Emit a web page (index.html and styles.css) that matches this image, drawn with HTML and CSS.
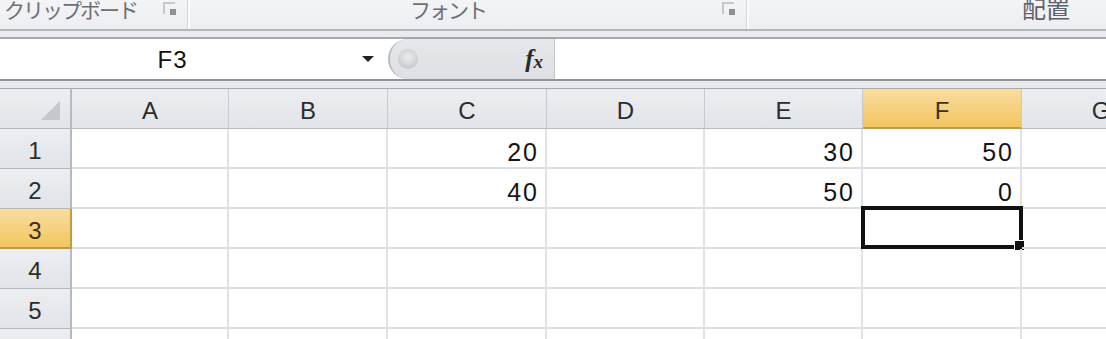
FILE: index.html
```html
<!DOCTYPE html>
<html>
<head>
  <title>Book1 - Excel</title>
  <link rel="stylesheet" href="styles.css">
</head>
<body>

<div class="ribbon">
  <div class="group group-clip">
    <span class="group-label">クリップボード</span>
    <span class="launcher"></span>
  </div>
  <div class="group group-font">
    <span class="group-label">フォント</span>
    <span class="launcher"></span>
  </div>
  <div class="group group-align">
    <span class="group-label">配置</span>
  </div>
</div>

<div class="formula-wrap">
  <div class="formula-bar">
    <div class="name-box">
      <span class="name-text">F3</span>
      <span class="name-arrow"></span>
    </div>
    <div class="fx-area">
      <span class="fx-knob"></span>
      <span class="fx">f<sub>x</sub></span>
    </div>
    <div class="formula-input"></div>
  </div>
</div>

<div class="sheet" id="sheet">
  <div class="corner"><span class="corner-tri"></span></div>
  <div class="col-head">A</div>
  <div class="col-head">B</div>
  <div class="col-head">C</div>
  <div class="col-head">D</div>
  <div class="col-head">E</div>
  <div class="col-head active">F</div>
  <div class="col-head">G</div>
</div>

<script>
  // cell values by row, columns A..G
  const data = [
    ["", "", "20", "", "30", "50", ""],
    ["", "", "40", "", "50", "0", ""],
    ["", "", "", "", "", "", ""],
    ["", "", "", "", "", "", ""],
    ["", "", "", "", "", "", ""],
    ["", "", "", "", "", "", ""]
  ];

  const sheet = document.getElementById("sheet");

  data.forEach((row, r) => {
    const head = document.createElement("div");
    head.className = "row-head" + (r === 2 ? " active" : "");
    head.textContent = r + 1;
    sheet.appendChild(head);

    row.forEach((val, c) => {
      const cell = document.createElement("div");
      cell.className = "cell";
      cell.textContent = val;
      if (r === 2 && c === 5) {
        cell.classList.add("selected");
        const box = document.createElement("span");
        box.className = "sel-box";
        const handle = document.createElement("span");
        handle.className = "fill-handle";
        cell.appendChild(box);
        cell.appendChild(handle);
      }
      sheet.appendChild(cell);
    });
  });
</script>

</body>
</html>
```

FILE: styles.css
```css
body {
  margin: 0;
  padding: 0;
  width: 1106px;
  height: 339px;
  overflow: hidden;
  background: #ffffff;
  font-family: "Liberation Sans", Arial, sans-serif;
}

/* ribbon strip (group captions) */
.ribbon {
  height: 29px;
  display: flex;
  background: linear-gradient(#f3f4f6, #eceef1);
  border-bottom: 2px solid #b4b8bd;
  overflow: hidden;
}

.group {
  position: relative;
  height: 100%;
  border-right: 2px solid #fafbfc;
  box-shadow: inset -1px 0 0 #d4d7db;
}

.group-clip {
  width: 188px;
}

.group-font {
  width: 557px;
}

.group-align {
  flex: 1;
  border-right: none;
  box-shadow: none;
}

.group-label {
  display: block;
  font-family: "Noto Sans CJK JP", sans-serif;
  font-size: 21px;
  line-height: 24px;
  margin-top: -3px;
  color: #6d6f73;
  white-space: nowrap;
}

.group-clip .group-label {
  padding-left: 4px;
  letter-spacing: -2px;
}

.group-font .group-label {
  padding-left: 220px;
  letter-spacing: -2px;
}

.group-align .group-label {
  padding-left: 273px;
  font-size: 24px;
  margin-top: -4px;
  color: #5c6068;
}

.launcher {
  position: absolute;
  top: 2px;
  right: 13px;
  width: 12px;
  height: 12px;
  border-left: 2px solid #c5c8cc;
  border-top: 2px solid #c5c8cc;
  box-sizing: border-box;
}

.launcher::after {
  content: "";
  position: absolute;
  right: -1px;
  bottom: -1px;
  width: 6px;
  height: 6px;
  background: #8e9196;
}

/* formula bar */
.formula-wrap {
  background: #e8eaed;
  padding: 6px 0 7px;
  border-bottom: 1px solid #a6a9ad;
}

.formula-bar {
  display: flex;
  height: 40px;
  background: #ffffff;
  border-top: 2px solid #a4a7ab;
  border-bottom: 2px solid #909397;
}

.name-box {
  width: 390px;
  display: flex;
  align-items: center;
  position: relative;
}

.name-text {
  display: block;
  width: 345px;
  text-align: center;
  font-size: 24px;
  padding-top: 2px;
  color: #111;
  letter-spacing: 1px;
}

.name-arrow {
  display: block;
  margin-left: 17px;
  width: 0;
  height: 0;
  border-left: 6px solid transparent;
  border-right: 6px solid transparent;
  border-top: 6px solid #222;
}

.fx-area {
  width: 167px;
  display: flex;
  align-items: center;
  justify-content: space-between;
  background: linear-gradient(#e6e8eb, #dcdfe3);
  border-radius: 22px 0 0 22px;
  border-left: 2px solid #b8bbbf;
  border-right: 1px solid #c3c6ca;
  box-sizing: border-box;
  margin-left: -2px;
}

.fx-knob {
  display: block;
  margin-left: 8px;
  width: 20px;
  height: 20px;
  border-radius: 50%;
  background: radial-gradient(circle at 50% 40%, #eceef0, #b9bcc0);
}

.fx {
  font-family: "Liberation Serif", serif;
  font-style: italic;
  font-weight: bold;
  font-size: 25px;
  color: #2a2a2a;
  margin-right: 11px;
}

.fx sub {
  font-size: 19px;
  vertical-align: -1px;
}

.formula-input {
  flex: 1;
}

/* worksheet grid */
.sheet {
  display: grid;
  grid-template-columns: 72px 157px 159px 159px 158px 158px 159px 159px;
  grid-auto-rows: 40px;
}

.corner,
.col-head,
.row-head {
  background: linear-gradient(#eceef1, #e1e4e8);
  box-sizing: border-box;
  border-right: 1px solid #c6c9cd;
  border-bottom: 1px solid #b6b9bd;
  color: #2c2c2c;
  font-size: 24px;
}

.corner {
  position: relative;
  border-right: 2px solid #b7babe;
}

.corner-tri {
  position: absolute;
  right: 10px;
  bottom: 8px;
  width: 0;
  height: 0;
  border-left: 19px solid transparent;
  border-bottom: 19px solid #c4c7cb;
}

.col-head {
  text-align: center;
  line-height: 44px;
}

.row-head {
  text-align: center;
  line-height: 44px;
  border-right: 2px solid #b7babe;
}

.col-head.active,
.row-head.active {
  background: linear-gradient(#f9dd9f, #f2c55f);
  border-bottom: 2px solid #c59b3a;
  color: #3b3120;
}

.row-head.active {
  border-right: 2px solid #c59b3a;
}

.cell {
  position: relative;
  box-sizing: border-box;
  border-right: 2px solid #e0e2e4;
  border-bottom: 2px solid #dcdee0;
  text-align: right;
  padding-right: 6px;
  font-size: 25px;
  letter-spacing: 2px;
  line-height: 46px;
  color: #151515;
}

.sel-box {
  position: absolute;
  left: -2px;
  top: -3px;
  right: -3px;
  bottom: -2px;
  border: 4px solid #111;
  box-sizing: border-box;
}

.fill-handle {
  position: absolute;
  right: -4px;
  bottom: -3px;
  width: 9px;
  height: 9px;
  background: #111;
  outline: 1px solid #fff;
}
```
